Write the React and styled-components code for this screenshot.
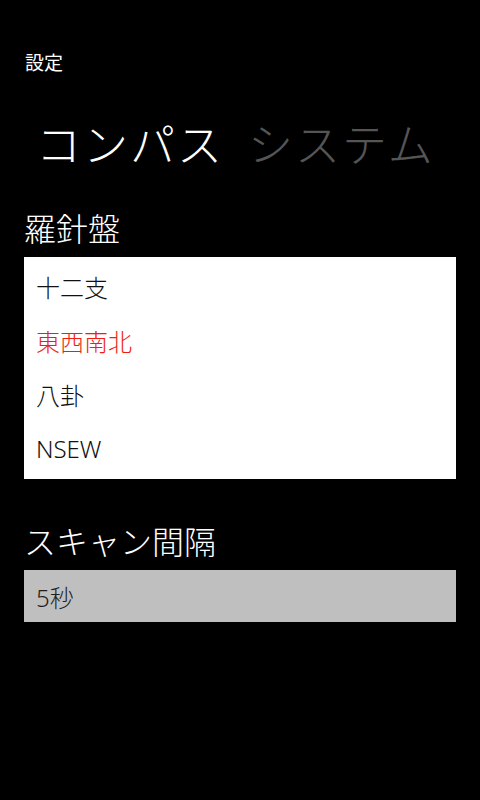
import React from 'react'
import styled, { createGlobalStyle } from 'styled-components'

const GlobalStyle = createGlobalStyle`
  html, body {
    margin: 0;
    padding: 0;
    background: #000;
  }
  body {
    font-family: "Noto Sans", "Noto Sans CJK JP", sans-serif;
    color: #fff;
  }
`;

const Page = styled.div`
  width: 480px;
  height: 800px;
  background: #000;
  padding: 0 24px;
  box-sizing: border-box;
  overflow: hidden;
`;

const AppTitle = styled.div`
  margin-top: 51px;
  padding-left: 1px;
  font-size: 19px;
  line-height: 24px;
`;

const Pivot = styled.div`
  display: flex;
  gap: 24px;
  margin-top: 42px;
  padding-left: 12px;
  white-space: nowrap;
`;

const PivotHeader = styled.div`
  font-size: 45px;
  font-weight: 300;
  letter-spacing: 2px;
  line-height: 56px;
  color: ${(p) => (p.active ? '#fff' : '#555')};
`;

const SectionTitle = styled.div`
  margin-top: ${(p) => p.gap}px;
  font-size: 32px;
  font-weight: 300;
  line-height: 40px;
`;

const List = styled.div`
  margin-top: 8px;
  background: #fff;
  padding: 2px 0 4px;
`;

const Item = styled.div`
  height: 54px;
  display: flex;
  align-items: center;
  padding-left: 12px;
  font-size: 24px;
  font-weight: 300;
  color: ${(p) => (p.selected ? '#f01e10' : '#111')};
`;

const Picker = styled.div`
  margin-top: 8px;
  height: 52px;
  background: #bfbfbf;
  display: flex;
  align-items: center;
  padding-left: 12px;
  font-size: 24px;
  font-weight: 300;
  color: #1e1e1e;
`;

const options = ['十二支', '東西南北', '八卦', 'NSEW'];

const App = () => {
  const selected = '東西南北';

  return (
    <>
      <GlobalStyle />
      <Page>
        <AppTitle>設定</AppTitle>
        <Pivot>
          <PivotHeader active>コンパス</PivotHeader>
          <PivotHeader>システム</PivotHeader>
        </Pivot>
        <SectionTitle gap={36}>羅針盤</SectionTitle>
        <List>
          {options.map((o) => (
            <Item key={o} selected={o === selected}>{o}</Item>
          ))}
        </List>
        <SectionTitle gap={43}>スキャン間隔</SectionTitle>
        <Picker>5秒</Picker>
      </Page>
    </>
  )
}

export default App
